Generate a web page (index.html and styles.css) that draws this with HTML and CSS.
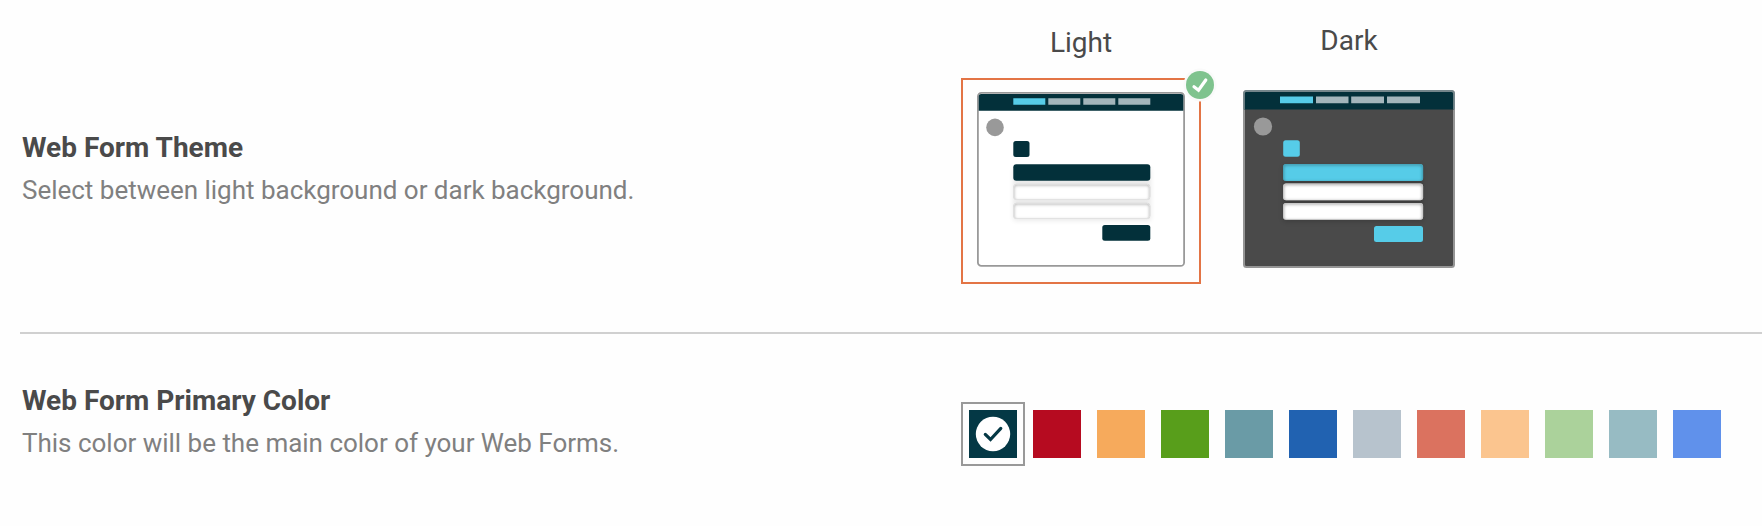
FILE: index.html
```
<!DOCTYPE html>
<html lang="en">
<head>
<meta charset="utf-8">
<title>Web Form Settings</title>
<link rel="stylesheet" href="styles.css">
</head>
<body>
<main class="settings">
  <section class="row row-theme">
    <div class="info">
      <h2 class="title">Web Form Theme</h2>
      <p class="desc">Select between light background or dark background.</p>
    </div>
    <div class="themes">
      <div class="theme theme-light">
        <span class="theme-name">Light</span>
        <div class="frame">
          <svg class="thumb" width="208" height="175" viewBox="0 0 208 175">
            <defs>
              <filter id="soft" x="-10%" y="-60%" width="120%" height="220%"><feGaussianBlur stdDeviation="2.500"/></filter>
              <filter id="inner" x="-5%" y="-50%" width="110%" height="200%"><feGaussianBlur stdDeviation="1.500"/></filter>
              <clipPath id="l1"><rect x="36.300" y="91.800" width="137" height="16.200" rx="3.500"/></clipPath>
              <clipPath id="l2"><rect x="36.300" y="110.800" width="137" height="16.200" rx="3.500"/></clipPath>
            </defs>
            <rect x="1" y="1" width="206" height="173" rx="3.5" fill="#fff"/>
            <rect x=".9" y=".9" width="206.2" height="173" rx="3.5" fill="none" stroke="#999" stroke-width="1.8"/>
            <path d="M1.700 18.700V4.500a2.500 2.500 0 0 1 2.500-2.500h199.600a2.500 2.500 0 0 1 2.500 2.500v14.200z" fill="#03303a"/>
            <path d="M36.300 6.200h32v6.600h-32z" fill="#56cce8"/>
            <path d="M71.300 6.200h32v6.600h-32zM106.300 6.200h32v6.600h-32zM141.300 6.200h32v6.600h-32z" fill="#a3b5bb"/>
            <circle cx="18" cy="35.400" r="8.800" fill="#999"/>
            <rect x="36.300" y="49" width="16.200" height="16" rx="2.500" fill="#03303a"/>
            <rect x="36" y="76" width="138" height="53" rx="3" fill="#000" opacity=".08" filter="url(#soft)"/>
            <rect x="36.300" y="72.300" width="137" height="16.500" rx="3" fill="#03303a"/>
            <g clip-path="url(#l1)">
              <rect x="36" y="91" width="138" height="18" fill="#fff"/>
              <rect x="35.800" y="92" width="138" height="18" rx="4" fill="none" stroke="#b5b5b5" stroke-width="3" filter="url(#inner)"/>
            </g>
            <rect x="36.800" y="92.300" width="136" height="15.200" rx="3" fill="none" stroke="#e2e2e2"/>
            <g clip-path="url(#l2)">
              <rect x="36" y="110" width="138" height="18" fill="#fff"/>
              <rect x="35.800" y="111" width="138" height="18" rx="4" fill="none" stroke="#b5b5b5" stroke-width="3" filter="url(#inner)"/>
            </g>
            <rect x="36.800" y="111.300" width="136" height="15.200" rx="3" fill="none" stroke="#e2e2e2"/>
            <rect x="125.300" y="133" width="48" height="15.800" rx="2.500" fill="#03303a"/>
          </svg>
          <svg class="badge" width="34" height="34" viewBox="0 0 34 34">
            <circle cx="17" cy="17" r="16.500" fill="#fafafa"/>
            <circle cx="17" cy="17" r="14" fill="#7fc38e"/>
            <path d="M11 18.800l4.500 3.400 7.300-10.200" fill="none" stroke="#fff" stroke-width="3.200" stroke-linecap="round"/>
          </svg>
        </div>
      </div>
      <div class="theme theme-dark">
        <span class="theme-name">Dark</span>
        <svg class="thumb" width="212" height="178" viewBox="0 0 212 178">
          <defs>
            <clipPath id="d0"><rect x="40.100" y="74" width="140" height="16.900" rx="3"/></clipPath>
            <clipPath id="d1"><rect x="40.100" y="93.400" width="140" height="16.800" rx="3"/></clipPath>
            <clipPath id="d2"><rect x="40.100" y="113" width="140" height="16.700" rx="3"/></clipPath>
          </defs>
          <rect x="1" y="1" width="210" height="176" rx="2.500" fill="#4a4a4a" stroke="#959595" stroke-width="2"/>
          <path d="M1 19.500V2h210v17.500z" fill="#03303a"/>
          <path d="M1 19.500V3.500a2.500 2.500 0 0 1 2.500-2.500h205a2.500 2.500 0 0 1 2.500 2.500v16" fill="none" stroke="#74868b" stroke-width="1.800"/>
          <path d="M37 6.500h33v6.700h-33z" fill="#56cce8"/>
          <path d="M73 6.500h32.500v6.700h-32.500zM108.200 6.500h32.800v6.700h-32.800zM144 6.500h33v6.700h-33z" fill="#a3b5bb"/>
          <circle cx="20" cy="36.500" r="9.100" fill="#999"/>
          <rect x="40.200" y="50.200" width="16.600" height="16.500" rx="2.500" fill="#56cce8"/>
          <rect x="40" y="75" width="140" height="57" rx="3" fill="#000" opacity=".15" filter="url(#soft)"/>
          <g clip-path="url(#d0)">
            <rect x="40" y="74" width="141" height="17" fill="#56cce8"/>
            <rect x="39.500" y="74" width="141" height="19" rx="4" fill="none" stroke="#3c91a5" stroke-width="3" filter="url(#inner)"/>
          </g>
          <g clip-path="url(#d1)">
            <rect x="40" y="93" width="141" height="18" fill="#fff"/>
            <rect x="39.500" y="93.500" width="141" height="18.500" rx="4" fill="none" stroke="#aaa" stroke-width="3" filter="url(#inner)"/>
          </g>
          <g clip-path="url(#d2)">
            <rect x="40" y="112" width="141" height="18" fill="#fff"/>
            <rect x="39.500" y="113" width="141" height="18.500" rx="4" fill="none" stroke="#aaa" stroke-width="3" filter="url(#inner)"/>
          </g>
          <rect x="131" y="136" width="49" height="16" rx="2.500" fill="#56cce8"/>
        </svg>
      </div>
    </div>
  </section>
  <section class="row row-color">
    <div class="info">
      <h2 class="title">Web Form Primary Color</h2>
      <p class="desc">This color will be the main color of your Web Forms.</p>
    </div>
    <div class="swatches">
      <div class="swatch selected">
        <div class="chip navy">
          <svg width="48" height="48" viewBox="0 0 48 48">
            <circle cx="24" cy="24" r="17.200" fill="#fff"/>
            <path d="M16.300 24.400l5.200 5.100L31.800 18.400" fill="none" stroke="#043845" stroke-width="3.200" stroke-linecap="round"/>
          </svg>
        </div>
      </div>
      <div class="swatch"><div class="chip red"></div></div>
      <div class="swatch"><div class="chip orange"></div></div>
      <div class="swatch"><div class="chip green"></div></div>
      <div class="swatch"><div class="chip teal"></div></div>
      <div class="swatch"><div class="chip blue"></div></div>
      <div class="swatch"><div class="chip gray"></div></div>
      <div class="swatch"><div class="chip coral"></div></div>
      <div class="swatch"><div class="chip peach"></div></div>
      <div class="swatch"><div class="chip mint"></div></div>
      <div class="swatch"><div class="chip aqua"></div></div>
      <div class="swatch"><div class="chip sky"></div></div>
    </div>
  </section>
</main>
</body>
</html>
```
FILE: styles.css
```
* { box-sizing: border-box; }
body { margin: 0; background: #fefefe; font-family: Roboto, sans-serif; color: #4a4a4a; }
svg { display: block; }
.settings { height: 526px; padding-left: 20px; overflow: hidden; }
.row { display: grid; grid-template-columns: 941px 1fr; }
.row-theme { height: 334px; border-bottom: 2px solid #d0d0d0; }
.info { padding-left: 2px; white-space: nowrap; }
.row-theme .info { padding-top: 128px; }
.row-color .info { padding-top: 47px; }
.title { margin: 0; font-size: 28px; line-height: 40px; font-weight: 700; }
.desc { margin: 0; padding-top: 3px; font-size: 26px; line-height: 38px; letter-spacing: -0.015px; color: #808080; }
.themes { display: flex; gap: 42px; }
.theme { display: flex; flex-direction: column; align-items: center; }
.theme-name { font-size: 28px; line-height: 40px; }
.theme-light { padding-top: 23px; }
.theme-light .theme-name { margin-bottom: 15px; }
.theme-dark { padding-top: 21px; }
.theme-dark .theme-name { margin-bottom: 29px; }
.frame { position: relative; width: 240px; height: 206px; padding: 12px 14px; border: 2px solid #e37445; }
.badge { position: absolute; top: -12px; right: -18px; }
.swatches { display: flex; padding-top: 68px; }
.swatch { width: 64px; height: 64px; padding: 6px; border: 2px solid transparent; }
.selected { border-color: #999; }
.chip { width: 48px; height: 48px; }
.navy { background: #043845; }
.red { background: #b60b20; }
.orange { background: #f6aa5c; }
.green { background: #589e1b; }
.teal { background: #6a9ba6; }
.blue { background: #2162b1; }
.gray { background: #b7c3cd; }
.coral { background: #db725f; }
.peach { background: #fbc58f; }
.mint { background: #abd29b; }
.aqua { background: #97bbc3; }
.sky { background: #6091eb; }
```
